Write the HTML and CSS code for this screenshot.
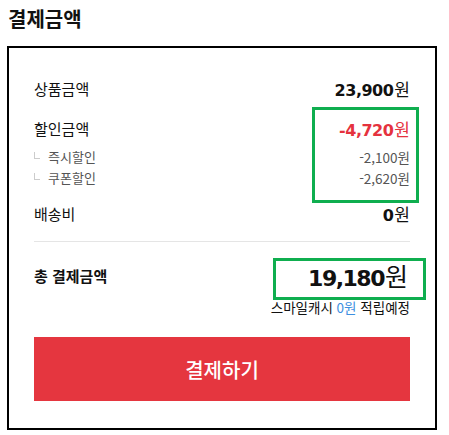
FILE: index.html
```html
<!DOCTYPE html>
<html lang="ko">
<head>
<meta charset="UTF-8">
<meta name="viewport" content="width=device-width, initial-scale=1.0">
<title>결제금액</title>
<link rel="stylesheet" href="styles.css">
</head>
<body>
<div class="page">
  <h2 class="title">결제금액</h2>
  <div class="summary">
    <div class="row row-main">
      <span class="label">상품금액</span>
      <span class="price"><b class="num">23,900</b>원</span>
    </div>

    <div class="row row-main row-discount">
      <span class="label">할인금액</span>
      <span class="price price-red"><b class="num">-4,720</b>원</span>
    </div>
    <div class="row row-sub">
      <span class="sub-label">즉시할인</span>
      <span class="sub-price">-2,100원</span>
    </div>
    <div class="row row-sub">
      <span class="sub-label">쿠폰할인</span>
      <span class="sub-price">-2,620원</span>
    </div>

    <div class="row row-main row-ship">
      <span class="label">배송비</span>
      <span class="price"><b class="num">0</b>원</span>
    </div>

    <hr class="divider">

    <div class="row row-total">
      <span class="total-label">총 결제금액</span>
      <span class="total-price"><b class="num">19,180</b><span class="won">원</span></span>
    </div>
    <p class="cash">스마일캐시 <em>0원</em> 적립예정</p>

    <button type="button" class="pay-btn">결제하기</button>

    <!-- highlight marks -->
    <div class="mark mark-discount"></div>
    <div class="mark mark-total"></div>
  </div>
</div>
</body>
</html>
```

FILE: styles.css
```css
/* payment summary */
body {
  margin: 0;
  font-family: "Noto Sans CJK KR", "Noto Sans", sans-serif;
  color: #111;
  background: #fff;
}

.page {
  padding: 9px 12px 0 7px;
}

.title {
  margin: 0 0 17px 1px;
  font-size: 20px;
  line-height: 20px;
  font-weight: 700;
}

.summary {
  position: relative;
  width: 376px;
  padding: 28px 25px 27px;
  border: 2px solid #000;
}

.row {
  display: flex;
  justify-content: space-between;
  align-items: center;
}

.row-main {
  height: 24px;
}

.row-discount {
  margin-top: 16px;
}

.row-ship {
  margin-top: 13px;
}

.label {
  font-size: 15px;
}

.num {
  font-family: "DejaVu Sans", sans-serif;
  font-weight: 700;
  letter-spacing: -0.5px;
  margin-right: 1px;
}

.price {
  font-size: 17px;
}

.price .num {
  font-size: 16px;
}

.price-red {
  color: #e5323e;
}

.row-sub {
  height: 21px;
  color: #555;
}

.row-discount + .row-sub {
  margin-top: 6px;
}

.sub-label {
  position: relative;
  padding-left: 14px;
  font-size: 13px;
}

.sub-label::before {
  content: "";
  position: absolute;
  left: 0;
  top: 5px;
  width: 5px;
  height: 6px;
  border-left: 1px solid #ccc;
  border-bottom: 1px solid #ccc;
}

.sub-price {
  font-size: 13.5px;
}

.divider {
  margin: 16px 0 0;
  border: 0;
  border-top: 1px solid #e5e5e5;
}

.row-total {
  height: 34px;
  margin-top: 16px;
}

.total-label {
  font-size: 15px;
  font-weight: 700;
}

.total-price {
  margin-right: 2px;
}

.total-price .num {
  font-size: 22px;
  letter-spacing: -1.5px;
  margin-right: 1px;
}

.won {
  font-size: 25px;
}

.cash {
  margin: 6px 0 0;
  font-size: 13.5px;
  line-height: 18px;
  text-align: right;
}

.cash em {
  font-style: normal;
  color: #3d8fe0;
}

.pay-btn {
  display: block;
  width: 100%;
  height: 64px;
  margin-top: 21px;
  border: none;
  background-color: #e5363f;
  color: #fff;
  font-family: inherit;
  font-size: 20px;
  font-weight: 500;
  cursor: pointer;
}

.mark {
  position: absolute;
  border: 3px solid #0fae4f;
}

.mark-discount {
  left: 303px;
  top: 59px;
  width: 101px;
  height: 90px;
}

.mark-total {
  left: 264px;
  top: 210px;
  width: 147px;
  height: 36px;
}
```
